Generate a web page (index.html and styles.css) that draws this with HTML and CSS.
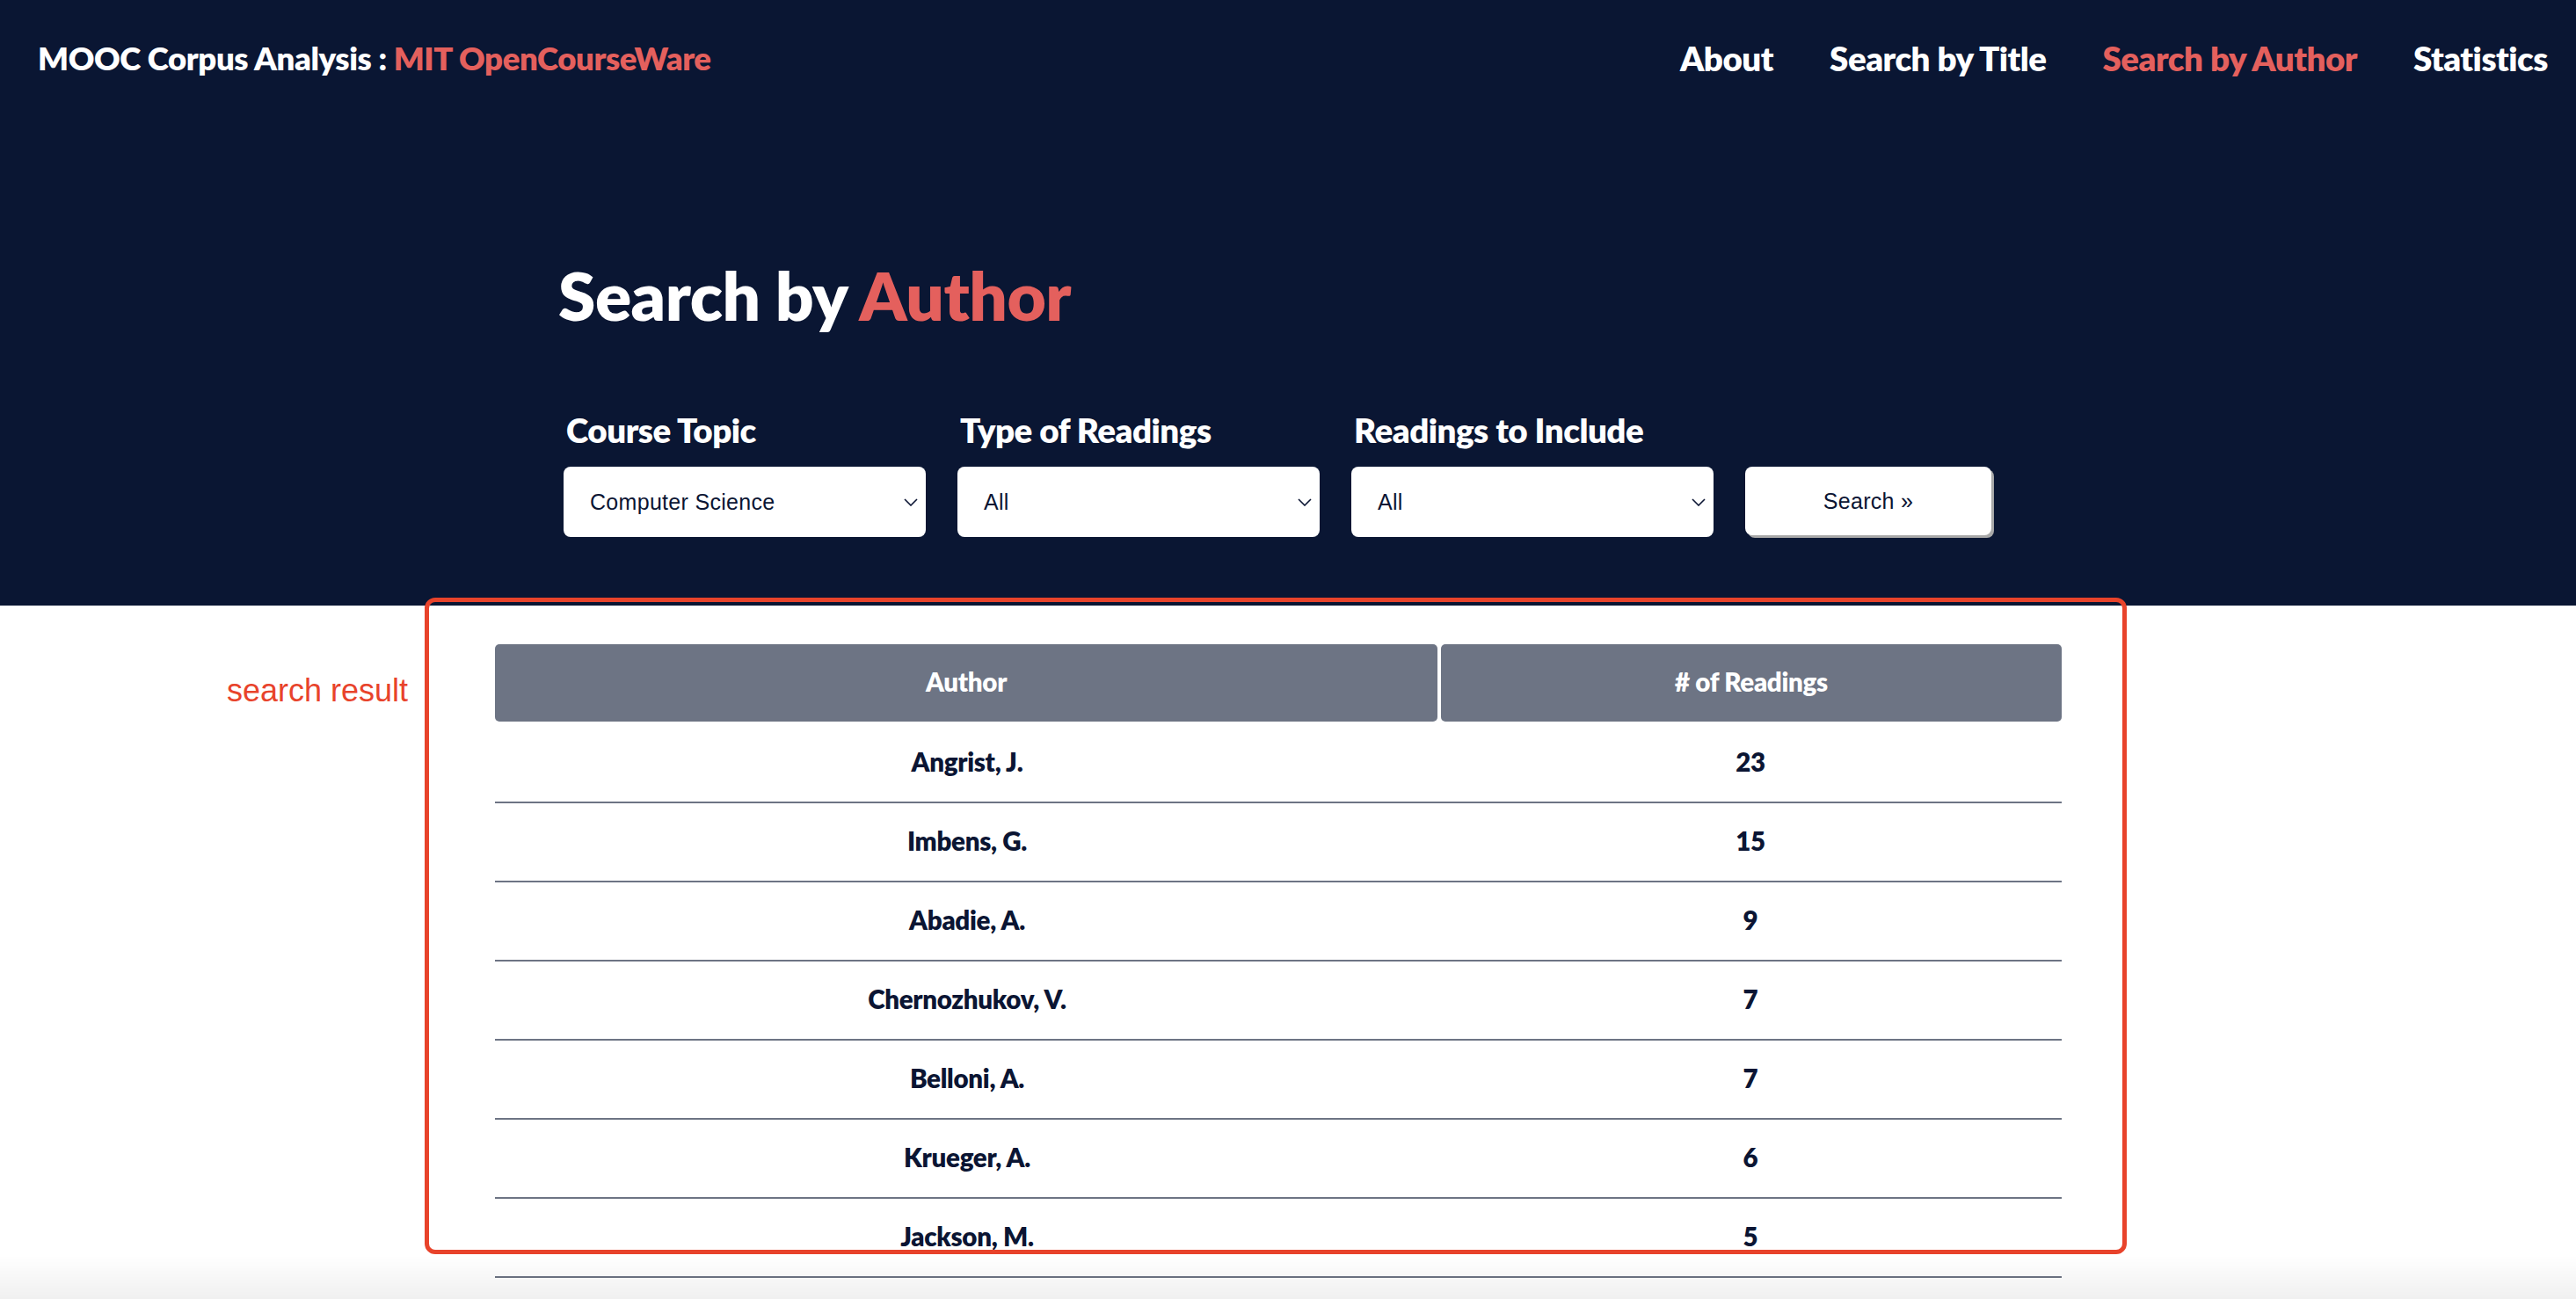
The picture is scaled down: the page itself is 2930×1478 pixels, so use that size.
FILE: index.html
```html
<!DOCTYPE html>
<html lang="en">
<head>
<meta charset="utf-8">
<title>MOOC Corpus Analysis : MIT OpenCourseWare — Search by Author</title>
<link rel="stylesheet" href="styles.css">
</head>
<body>
<header class="hero">
  <nav class="topbar">
    <a class="brand" href="#">MOOC Corpus Analysis : <span class="accent">MIT OpenCourseWare</span></a>
    <ul class="nav-links">
      <li><a href="#">About</a></li>
      <li><a href="#">Search by Title</a></li>
      <li><a href="#" class="active">Search by Author</a></li>
      <li><a href="#">Statistics</a></li>
    </ul>
  </nav>
  <section class="search-panel">
    <h1 class="page-title">Search by <span class="accent">Author</span></h1>
    <form class="filters">
      <div class="field">
        <label class="field-label">Course Topic</label>
        <div class="select"><span>Computer Science</span><svg class="chev" viewBox="0 0 16 9" width="16" height="9"><path d="M1 1 L8 8 L15 1" fill="none" stroke="#0b1533" stroke-width="1.6"/></svg></div>
      </div>
      <div class="field">
        <label class="field-label">Type of Readings</label>
        <div class="select"><span>All</span><svg class="chev" viewBox="0 0 16 9" width="16" height="9"><path d="M1 1 L8 8 L15 1" fill="none" stroke="#0b1533" stroke-width="1.6"/></svg></div>
      </div>
      <div class="field">
        <label class="field-label">Readings to Include</label>
        <div class="select"><span>All</span><svg class="chev" viewBox="0 0 16 9" width="16" height="9"><path d="M1 1 L8 8 L15 1" fill="none" stroke="#0b1533" stroke-width="1.6"/></svg></div>
      </div>
      <button class="search-btn" type="button">Search »</button>
    </form>
  </section>
</header>

<main class="results">
  <div class="table">
    <div class="thead">
      <div class="th th-author">Author</div>
      <div class="th th-count"># of Readings</div>
    </div>
    <div class="tr"><div class="td td-author">Angrist, J.</div><div class="td td-count">23</div></div>
    <div class="tr"><div class="td td-author">Imbens, G.</div><div class="td td-count">15</div></div>
    <div class="tr"><div class="td td-author">Abadie, A.</div><div class="td td-count">9</div></div>
    <div class="tr"><div class="td td-author">Chernozhukov, V.</div><div class="td td-count">7</div></div>
    <div class="tr"><div class="td td-author">Belloni, A.</div><div class="td td-count">7</div></div>
    <div class="tr"><div class="td td-author">Krueger, A.</div><div class="td td-count">6</div></div>
    <div class="tr"><div class="td td-author">Jackson, M.</div><div class="td td-count">5</div></div>
  </div>
</main>

<div class="annot-box"></div>
<div class="annot-label">search result</div>
<div class="bottom-fade"></div>
</body>
</html>
```

FILE: styles.css
```css
* { box-sizing: border-box; }

html, body {
  margin: 0;
  padding: 0;
}

body {
  position: relative;
  background: #ffffff;
  font-family: Lato, "Open Sans", "Noto Sans", sans-serif;
  color: #0b1533;
}

a { text-decoration: none; color: inherit; }

.accent { color: #e4605d; }

/* ---------- hero ---------- */
.hero {
  background: #0a1633;
  color: #ffffff;
  padding-bottom: 78px;
}

.topbar {
  height: 132px;
  display: flex;
  align-items: center;
  justify-content: space-between;
  padding: 0 32px 0 43px;
}

.brand {
  font-size: 36.5px;
  font-weight: 800;
  color: #ffffff;
  letter-spacing: -0.4px;
}

.nav-links {
  list-style: none;
  display: flex;
  gap: 64px;
  margin: 0;
  padding: 0;
}

.nav-links a {
  font-size: 38.5px;
  font-weight: 800;
  color: #ffffff;
  letter-spacing: -0.5px;
}

.nav-links a.active { color: #e4605d; }

.search-panel {
  padding-left: 641px;
}

.page-title {
  margin: 158px 0 0 -6px;
  font-size: 76.5px;
  line-height: 90px;
  font-weight: 800;
  letter-spacing: -0.5px;
}

.filters {
  display: flex;
  align-items: flex-end;
  gap: 36px;
  margin-top: 87px;
}

.field {
  display: flex;
  flex-direction: column;
  gap: 20px;
}

.field-label {
  font-size: 38.5px;
  line-height: 44px;
  font-weight: 800;
  letter-spacing: -0.5px;
  padding-left: 3px;
}

.select {
  width: 412px;
  height: 80px;
  background: #ffffff;
  border-radius: 8px;
  display: flex;
  align-items: center;
  justify-content: space-between;
  padding: 0 9px 0 30px;
  font-family: "Liberation Sans", Arial, sans-serif;
  font-size: 25px;
  letter-spacing: 0.3px;
  color: #0b1533;
}

.chev { display: block; }

.search-btn {
  width: 280px;
  height: 78px;
  margin-bottom: 2px;
  background: #ffffff;
  border: none;
  border-radius: 8px;
  box-shadow: 3px 3px 0 #a8a8a8;
  font-family: "Liberation Sans", Arial, sans-serif;
  font-size: 25px;
  letter-spacing: 0.3px;
  color: #0b1533;
  padding: 0;
}

/* ---------- results ---------- */
.results {
  padding: 44px 0 0 563px;
}

.table {
  width: 1782px;
}

.thead {
  display: grid;
  grid-template-columns: 1072px 1fr;
  gap: 4px;
  margin-bottom: 3px;
}

.th {
  height: 88px;
  background: #6d7484;
  border-radius: 5px;
  color: #ffffff;
  font-size: 29.5px;
  font-weight: 800;
  letter-spacing: -0.3px;
  padding-bottom: 4px;
  display: flex;
  align-items: center;
  justify-content: center;
}

.tr {
  display: grid;
  grid-template-columns: 1074px 1fr;
  height: 90px;
  border-bottom: 2px solid #6d7484;
}

.td {
  display: flex;
  align-items: center;
  justify-content: center;
  font-size: 29.5px;
  font-weight: 800;
  letter-spacing: -0.3px;
  padding-bottom: 3px;
  color: #0b1533;
}

/* ---------- annotation overlay ---------- */
.annot-box {
  position: absolute;
  left: 483px;
  top: 680px;
  width: 1936px;
  height: 747px;
  border: 5px solid #e8432b;
  border-radius: 12px;
  pointer-events: none;
}

.annot-label {
  position: absolute;
  left: 258px;
  top: 765px;
  font-family: "Liberation Sans", Arial, sans-serif;
  font-size: 36px;
  line-height: 42px;
  color: #e8432b;
}

.bottom-fade {
  position: fixed;
  left: 0;
  right: 0;
  bottom: 0;
  height: 50px;
  background: linear-gradient(to bottom, rgba(0,0,0,0), rgba(0,0,0,0.06));
  pointer-events: none;
}
```
